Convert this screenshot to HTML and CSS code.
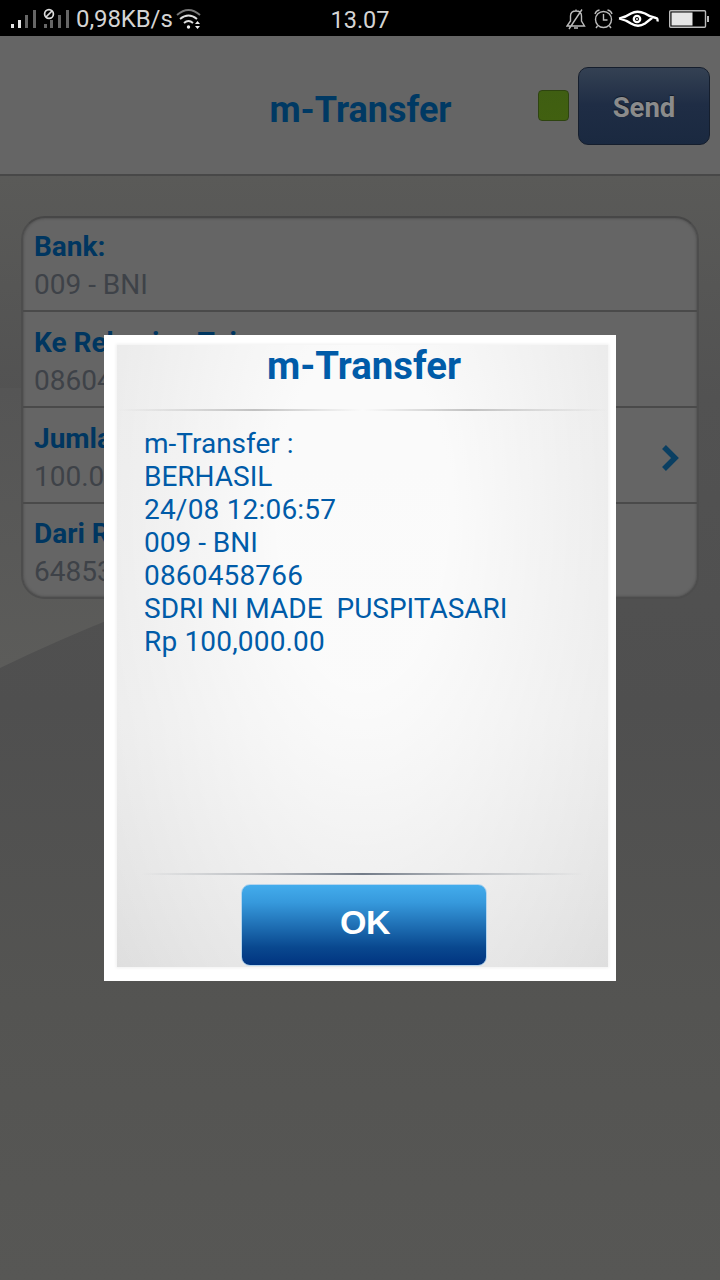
FILE: index.html
```html
<!DOCTYPE html>
<html lang="id">
<head>
<meta charset="utf-8">
<title>m-Transfer</title>
<link rel="stylesheet" href="styles.css">
</head>
<body>
<div class="screen">
  <div class="statusbar">
    <div class="status-left">
      <svg class="signals" width="64" height="36" viewBox="0 0 64 36">
        <g fill="#e4e4e4"><rect x="1" y="23" width="3" height="4"/><rect x="8" y="19" width="3" height="8"/></g>
        <g fill="#666"><rect x="15" y="14" width="3" height="13"/><rect x="23" y="9" width="3" height="18"/><rect x="34" y="23" width="3" height="4"/><rect x="40" y="19" width="3" height="8"/><rect x="48" y="14" width="3" height="13"/><rect x="56" y="9" width="3" height="18"/></g>
        <g fill="#000" stroke="#ddd" stroke-width="1.7"><circle cx="39" cy="13" r="4.4"/><path d="M36 16l6-6"/></g>
      </svg>
      <span class="speed">0,98KB/s</span>
      <svg class="wifi" width="26" height="36" viewBox="0 0 26 36" fill="none" stroke-width="1.9">
        <path d="M1 14Q12.500 4 24 14" stroke="#777"/>
        <path d="M4 18Q12.500 11 21 18M8 22Q12.500 18 17 22" stroke="#ddd"/>
        <circle cx="12.500" cy="26" r="1.700" fill="#eee"/>
        <path d="M19 23l2.500-3 2.500 3zM19 25l2.500 3 2.500-3z" fill="#eee"/>
      </svg>
    </div>
    <span class="clock">13.07</span>
    <svg class="status-right" width="144" height="36" viewBox="0 0 144 36" fill="none" stroke="#bbb" stroke-width="1.400">
      <path d="M1 25h17.500l-3-5v-5q0-5-5.500-5t-5.500 5v5zM10 10V8.500M8 27h4M3 28L16 8.500"/>
      <circle cx="37.500" cy="18.500" r="8"/><path d="M37.500 13v6h4M29 13q1-3.500 4.500-4M46 13q-1-3.500-4.500-4M31.500 25l-1.500 2M43.500 25l1.500 2"/>
      <g stroke="#fff" stroke-width="2.300"><path d="M53 17.500Q60 16 65 12.500Q71 9 79 12.500Q84 16 90 17Q92 17 91.500 20.500M53 17.500Q60 19 65 22.500Q72 27 79 22.500L86 17"/><circle cx="71" cy="18" r="3.200"/></g>
      <circle cx="71" cy="18" r="1" fill="#fff" stroke="none"/>
      <rect x="103.700" y="9.700" width="35.800" height="16.600" rx="1"/>
      <rect x="105.500" y="11.500" width="21" height="13" fill="#e5e5e5" stroke="none"/>
      <path d="M142 15v6" stroke-width="2"/>
    </svg>
  </div>
  <header class="header">
    <h1 class="header-title">m-Transfer</h1>
    <div class="header-actions">
      <span class="indicator"></span>
      <button class="send">Send</button>
    </div>
  </header>
  <main class="content">
    <svg class="backdrop" width="720" height="1104" viewBox="0 0 720 1104">
      <defs>
        <linearGradient id="base" x1="0" y1="0" x2="0" y2="1"><stop offset="0" stop-color="#5a5a58"/><stop offset=".2" stop-color="#525252"/><stop offset=".48" stop-color="#4f4f4f"/><stop offset=".75" stop-color="#545452"/><stop offset="1" stop-color="#575755"/></linearGradient>
        <linearGradient id="wave" x1="0" y1="0" x2="0" y2="1"><stop offset="0" stop-color="#555"/><stop offset="1" stop-color="#5c5c5a"/></linearGradient>
      </defs>
      <path fill="url(#base)" d="M0 0h720v1104H0z"/>
      <path fill="url(#wave)" d="M0 212H400V350Q180 405 0 492z"/>
    </svg>
    <section class="list">
      <div class="row"><div><div class="label">Bank:</div><div class="value">009 - BNI</div></div></div>
      <div class="row"><div><div class="label">Ke Rekening Tujuan:</div><div class="value">0860458766</div></div></div>
      <div class="row"><div><div class="label">Jumlah</div><div class="value">100.000</div></div>
        <svg class="chevron" width="20" height="28" viewBox="0 0 20 28"><path d="M3 3l11 11L3 25" fill="none" stroke="#0a3f62" stroke-width="5.500"/></svg></div>
      <div class="row"><div><div class="label">Dari R</div><div class="value">64853</div></div></div>
    </section>
  </main>
  <div class="dialog">
    <div class="panel">
      <h2 class="dialog-title">m-Transfer</h2>
      <div class="rule rule-top"></div>
      <div class="message">m-Transfer :
BERHASIL
<span class="stamp">24/08 12:06:57</span>
009 - BNI
<span class="digits">0860458766</span>
SDRI NI MADE  PUSPITASARI
<span class="digits">Rp 100,000.00</span></div>
      <div class="rule rule-bottom"></div>
      <button class="ok">OK</button>
    </div>
  </div>
</div>
</body>
</html>
```

FILE: styles.css
```css
* { box-sizing: border-box; }
body { margin: 0; font-family: Roboto, "Liberation Sans", sans-serif; background: #545453; }
h1, h2 { margin: 0; }
button { border: 0; padding: 0; font-family: inherit; }
svg { display: block; flex: none; }
.screen { position: relative; width: 720px; height: 1280px; overflow: hidden; display: flex; flex-direction: column; }
.statusbar { height: 36px; flex: none; background: #000; color: #d4d4d4; display: grid; grid-template-columns: 1fr auto 1fr; align-items: center; font-size: 24px; line-height: 36px; padding: 0 10px; }
.status-left { display: flex; align-items: center; }
.speed { width: 98px; margin-left: 2px; white-space: nowrap; letter-spacing: -.1px; }
.wifi { margin-left: 2px; }
.clock { font-size: 23.5px; padding-top: 2px; }
.status-right { justify-self: end; }
.header { height: 140px; flex: none; background: #656565; border-bottom: 2px solid #484848; display: grid; grid-template-columns: 1fr auto 1fr; align-items: center; padding: 1px 10px 0; }
.header-title { grid-column: 2; font-size: 36px; line-height: 44px; font-weight: 700; color: #003963; padding: 8px 0 0 1px; }
.header-actions { display: flex; justify-content: flex-end; align-items: center; gap: 9px; padding-top: 1px; }
.indicator { width: 31px; height: 31px; border-radius: 4px; background: linear-gradient(#3f5e12, #416010); border: 1px solid #2e4410; margin-bottom: 1px; }
.send { width: 132px; height: 78px; border-radius: 10px; border: 1px solid #151e2d; background: linear-gradient(#344153, #1f2d45 48%, #1a2940); color: #8b8b8b; font-size: 27.5px; font-weight: 700; text-shadow: 0 -1px 1px #111a28; padding-top: 3px; }
.content { position: relative; flex: 1; padding: 40px 21px 0; }
.backdrop { position: absolute; left: 0; top: 0; }
.list { position: relative; height: 383px; border: 2px solid #4d4d4d; border-top-color: #474747; border-radius: 24px; background: #656565; overflow: hidden; box-shadow: inset 0 0 2px 1px #555; }
.row { display: flex; justify-content: space-between; align-items: center; height: 96px; padding: 5px 16px 0 11px; border-bottom: 2px solid #4a4a4a; }
.row:first-child { height: 94px; padding-top: 3px; }
.row:last-child { border-bottom: 0; padding-top: 2px; }
.label { font-size: 28px; line-height: 38px; font-weight: 700; color: #003660; }
.value { font-size: 28px; line-height: 38px; color: #3e4248; }
.dialog { position: absolute; left: 104px; top: 335px; width: 512px; height: 646px; background: #fff; padding: 10px 8px 14px 13px; }
.panel { height: 622px; display: flex; flex-direction: column; align-items: center; background: radial-gradient(ellipse 340px 660px at 50% 28%, rgba(255,255,255,.82) 25%, rgba(255,255,255,0) 100%), linear-gradient(#e5e5e5, #e8e8e8 60%, #dedede); box-shadow: 0 0 3px 1px #f0f0f0; }
.dialog-title { height: 64px; font-size: 38.4px; line-height: 41px; font-weight: 700; color: #005ba8; padding-left: 3px; }
.rule { width: 491px; height: 2px; flex: none; }
.rule-top { background: linear-gradient(90deg, transparent, #c2c2c2 28%, transparent 50%, #c2c2c2 72%, transparent); }
.message { align-self: stretch; height: 462px; padding: 16px 0 0 27px; font-size: 28px; line-height: 33px; color: #005ba8; white-space: pre; }
.stamp { letter-spacing: .2px; }
.digits { letter-spacing: .17px; }
.rule-bottom { background: linear-gradient(90deg, transparent 5%, #bcbfc3 28%, #727b88 50%, #bcbfc3 72%, transparent 95%); }
.ok { width: 246px; height: 82px; flex: none; margin: 9px 0 0 2px; border-radius: 9px; border: 1px solid #b5d5ed; background: linear-gradient(#43acec, #3699dc 22%, #09488f 78%, #003480); color: #fff; font: 700 34px "Liberation Sans", Arial, sans-serif; padding: 0 0 5px 3px; letter-spacing: -.5px; }
```
